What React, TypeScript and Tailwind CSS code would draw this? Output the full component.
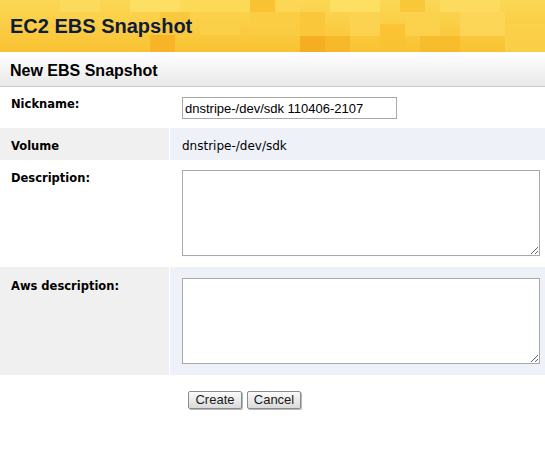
import React from "react";

const tiles: [number, number, number, number, string][] = [
  [0, 0, 545, 52, "url(#g)"],
  [60, 0, 40, 12, "#fcdc5e"],
  [130, 0, 50, 12, "#fde067"],
  [180, 0, 70, 12, "#fcd957"],
  [250, 0, 25, 12, "#f7be2e"],
  [275, 0, 25, 12, "#fcd655"],
  [300, 12, 25, 24, "#f9c53a"],
  [330, 0, 50, 12, "#fde065"],
  [400, 0, 25, 12, "#f8c436"],
  [440, 0, 60, 12, "#fcdc60"],
  [150, 35, 25, 17, "#f6b224"],
  [160, 12, 30, 23, "#f9c73c"],
  [200, 12, 40, 23, "#fad04a"],
  [250, 12, 50, 23, "#f9cc42"],
  [300, 36, 25, 16, "#f4a91f"],
  [325, 36, 25, 16, "#f6b628"],
  [350, 12, 30, 24, "#fbd452"],
  [380, 24, 25, 28, "#f8c232"],
  [405, 12, 35, 24, "#fad24d"],
  [420, 36, 40, 16, "#f7bb2b"],
  [460, 12, 45, 24, "#fcd75a"],
  [505, 24, 40, 28, "#fad04b"],
];

function HeaderArt() {
  return (
    <svg className="absolute inset-0" width="545" height="52" viewBox="0 0 545 52" preserveAspectRatio="none">
      <defs>
        <linearGradient id="g" x1="0" y1="0" x2="0" y2="1">
          <stop offset="0" stopColor="#fcd856" />
          <stop offset="1" stopColor="#f9c232" />
        </linearGradient>
      </defs>
      {tiles.map(([x, y, w, h, f], i) => (
        <rect key={i} x={x} y={y} width={w} height={h} fill={f} opacity={i === 0 ? 1 : 0.85} />
      ))}
    </svg>
  );
}

const label = "font-['DejaVu_Sans',sans-serif] font-bold text-[11.5px] leading-[14px] text-black";

export default function App() {
  return (
    <div className="w-[545px] h-[461px] bg-white font-['Liberation_Sans',Arial,sans-serif]">
      <div className="relative h-[52px] overflow-hidden">
        <HeaderArt />
        <h1 className="relative pl-[10px] pt-[16px] text-[20px] leading-[20px] font-bold text-[#0e1c3c]">
          EC2 EBS Snapshot
        </h1>
      </div>
      <div className="h-[35px] border-b border-[#c9c9c9] bg-gradient-to-b from-white to-[#e9e9e9] pl-[10px] pt-[11px]">
        <h2 className="text-[16px] leading-[16px] font-bold text-black">New EBS Snapshot</h2>
      </div>

      <div className="flex h-[41px]">
        <div className={`w-[170px] pl-[11px] pt-[10px] ${label}`}>Nickname:</div>
        <div className="flex-1 pl-[12px] pt-[10px]">
          <input
            defaultValue="dnstripe-/dev/sdk 110406-2107"
            className="block w-[215px] h-[22px] border border-[#a9a9a9] bg-white px-[2px] text-[13px] text-black outline-none font-['Liberation_Sans',Arial,sans-serif]"
          />
        </div>
      </div>

      <div className="flex h-[32px]">
        <div className={`w-[169px] bg-[#f0f0f0] pl-[11px] pt-[11px] ${label}`}>Volume</div>
        <div className="w-[1px] bg-white" />
        <div className="flex-1 bg-[#eef1f8] pl-[12px] pt-[11px] font-['DejaVu_Sans',sans-serif] text-[12px] leading-[14px] text-black">
          dnstripe-/dev/sdk
        </div>
      </div>

      <div className="flex h-[107px]">
        <div className={`w-[170px] pl-[11px] pt-[11px] ${label}`}>Description:</div>
        <div className="flex-1 pl-[12px] pt-[10px]">
          <textarea className="block w-[358px] h-[86px] border border-[#a9a9a9] bg-white outline-none" />
        </div>
      </div>

      <div className="flex h-[108px]">
        <div className={`w-[169px] bg-[#f0f0f0] pl-[11px] pt-[12px] ${label}`}>Aws description:</div>
        <div className="w-[1px] bg-white" />
        <div className="flex-1 bg-[#eef1f8] pl-[12px] pt-[11px]">
          <textarea className="block w-[358px] h-[86px] border border-[#a9a9a9] bg-white outline-none" />
        </div>
      </div>

      <div className="flex gap-[5px] pl-[188px] pt-[16px]">
        <button className="w-[54px] h-[18px] border border-[#8c8c8c] rounded-[2px] bg-gradient-to-b from-[#fbfbfb] to-[#dadada] shadow-[1px_1px_0_#b5b5b5] text-[13px] leading-[16px] text-[#1a1a1a]">
          Create
        </button>
        <button className="w-[54px] h-[18px] border border-[#8c8c8c] rounded-[2px] bg-gradient-to-b from-[#fbfbfb] to-[#dadada] shadow-[1px_1px_0_#b5b5b5] text-[13px] leading-[16px] text-[#1a1a1a]">
          Cancel
        </button>
      </div>
    </div>
  );
}
